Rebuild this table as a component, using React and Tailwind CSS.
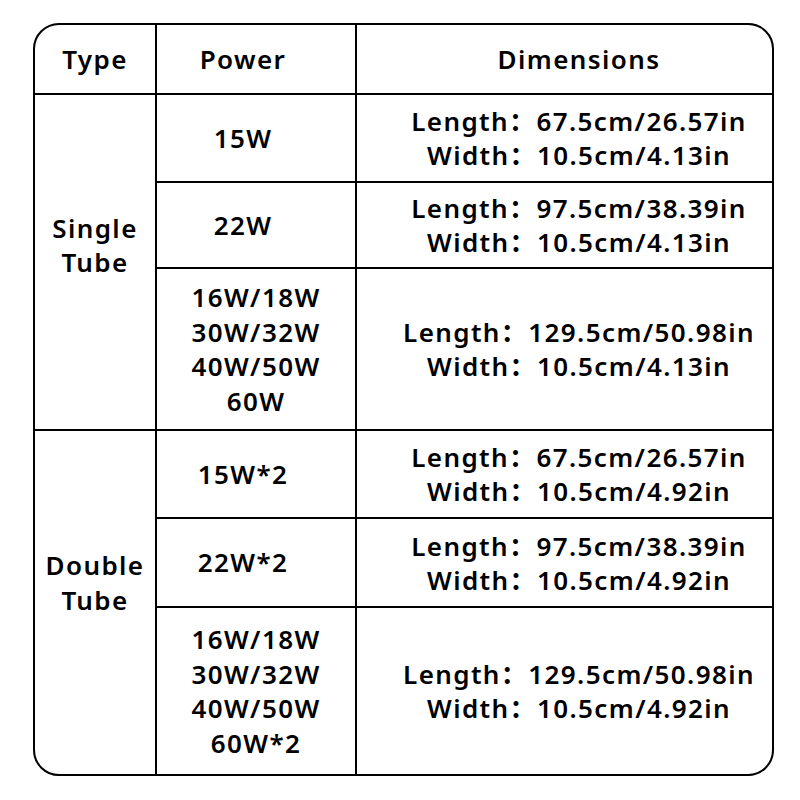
const font = { fontFamily: '"Noto Sans", "Noto Sans CJK SC", sans-serif' };

const singleRows = [
  { power: ["15W"], len: "67.5cm/26.57in", wid: "10.5cm/4.13in" },
  { power: ["22W"], len: "97.5cm/38.39in", wid: "10.5cm/4.13in" },
  { power: ["16W/18W", "30W/32W", "40W/50W", "60W"], len: "129.5cm/50.98in", wid: "10.5cm/4.13in" },
];

const doubleRows = [
  { power: ["15W*2"], len: "67.5cm/26.57in", wid: "10.5cm/4.92in" },
  { power: ["22W*2"], len: "97.5cm/38.39in", wid: "10.5cm/4.92in" },
  { power: ["16W/18W", "30W/32W", "40W/50W", "60W*2"], len: "129.5cm/50.98in", wid: "10.5cm/4.92in" },
];

function PowerCell({ lines }) {
  const single = lines.length === 1;
  return (
    <div className={`bg-white flex flex-col items-center justify-center leading-[34.5px] ${single ? "pr-[26px]" : ""}`}>
      {lines.map((l) => (
        <span key={l}>{l}</span>
      ))}
    </div>
  );
}

function DimCell({ len, wid }) {
  return (
    <div className="bg-white flex flex-col items-center justify-center pl-[29px] leading-[34px]">
      <span className="whitespace-pre">Length：{len}</span>
      <span className="whitespace-pre">Width：{wid}</span>
    </div>
  );
}

function Row({ r }) {
  return (
    <>
      <PowerCell lines={r.power} />
      <DimCell len={r.len} wid={r.wid} />
    </>
  );
}

export default function App() {
  return (
    <div className="w-[800px] h-[800px] bg-white pt-[23px] pl-[33px]" style={font}>
      <div className="w-[741px] h-[753px] border-2 border-black rounded-[26px] overflow-hidden bg-black">
        <div className="grid grid-cols-[120px_198px_1fr] grid-rows-[68px_86px_84px_160px_86px_87px_166px] gap-[2px] h-full text-[26px] tracking-[1.4px] font-semibold text-black">
          <div className="bg-white flex items-center justify-center">Type</div>
          <div className="bg-white flex items-center justify-center pr-[26px]">Power</div>
          <div className="bg-white flex items-center justify-center pl-[29px]">Dimensions</div>

          <div className="bg-white row-span-3 flex flex-col items-center justify-center pb-[34px] leading-[34px]">
            <span>Single</span>
            <span>Tube</span>
          </div>
          {singleRows.map((r, i) => (
            <Row key={"s" + i} r={r} />
          ))}

          <div className="bg-white row-span-3 flex flex-col items-center justify-center pb-[40px] leading-[35px]">
            <span>Double</span>
            <span>Tube</span>
          </div>
          {doubleRows.map((r, i) => (
            <Row key={"d" + i} r={r} />
          ))}
        </div>
      </div>
    </div>
  );
}
